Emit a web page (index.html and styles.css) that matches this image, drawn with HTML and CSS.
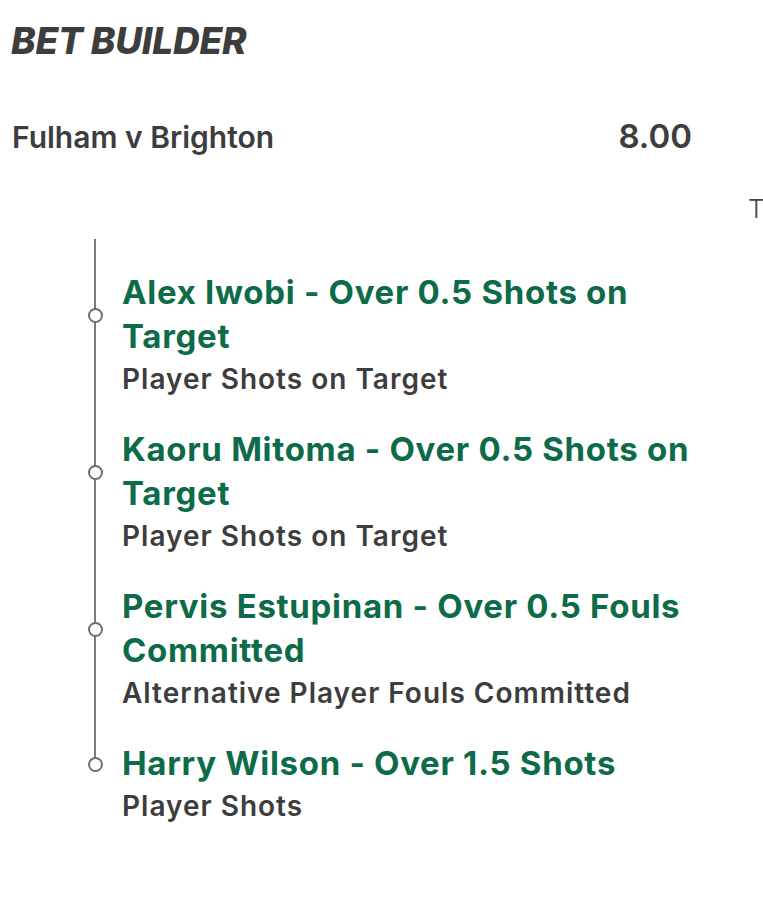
FILE: index.html
```html
<!DOCTYPE html>
<html lang="en">
<head>
<meta charset="utf-8">
<title>Bet Builder</title>
<link rel="stylesheet" href="styles.css">
</head>
<body>
<div class="page">
  <h1 class="title">BET BUILDER</h1>
  <div class="match-row">
    <span class="match">Fulham v Brighton</span>
    <span class="odds">8.00</span>
  </div>
  <div class="clip-row"><span class="clip-text">T</span></div>
  <div class="legs">
    <div class="leg">
      <div class="leg-name">Alex Iwobi - Over 0.5 Shots on Target<span class="dot"></span></div>
      <div class="leg-market">Player Shots on Target</div>
    </div>
    <div class="leg">
      <div class="leg-name">Kaoru Mitoma - Over 0.5 Shots on Target<span class="dot"></span></div>
      <div class="leg-market">Player Shots on Target</div>
    </div>
    <div class="leg">
      <div class="leg-name">Pervis Estupinan - Over 0.5 Fouls Committed<span class="dot"></span></div>
      <div class="leg-market">Alternative Player Fouls Committed</div>
    </div>
    <div class="leg">
      <div class="leg-name">Harry Wilson - Over 1.5 Shots<span class="dot"></span></div>
      <div class="leg-market">Player Shots</div>
    </div>
  </div>
</div>
</body>
</html>
```

FILE: styles.css
```css
* { box-sizing: border-box; }
html, body {
  margin: 0;
  padding: 0;
  background: #ffffff;
}
body {
  font-family: Inter, "Noto Sans", "Liberation Sans", sans-serif;
  color: #3e3e3e;
  width: 763px;
  height: 915px;
  overflow: hidden;
}
.page {
  padding-top: 18px;
}
.title {
  margin: 0 0 0 11px;
  font-size: 37px;
  line-height: 46px;
  font-weight: 800;
  font-style: italic;
  letter-spacing: -0.2px;
  color: #3d3d3d;
}
.match-row {
  display: flex;
  justify-content: space-between;
  align-items: baseline;
  margin-top: 52px;
  padding: 0 71px 0 12px;
  line-height: 40px;
}
.match {
  font-size: 30px;
  font-weight: 600;
  color: #3d3d3d;
}
.odds {
  font-size: 33px;
  font-weight: 600;
  color: #3d3d3d;
}
.clip-row {
  margin-top: 37px;
  padding-left: 748px;
  white-space: nowrap;
  line-height: 30px;
}
.clip-text {
  font-size: 26px;
  font-weight: 300;
  color: #444;
}
.legs {
  position: relative;
  margin-top: 12px;
  padding: 31px 0 0 122px;
}
.legs::before {
  content: "";
  position: absolute;
  left: 94px;
  top: 0;
  bottom: 66px;
  width: 2px;
  background: #7a7a7a;
}
.leg {
  margin-bottom: 29px;
}
.leg:last-child {
  margin-bottom: 0;
}
.leg-name {
  position: relative;
  font-size: 33px;
  line-height: 44px;
  font-weight: 700;
  letter-spacing: 0.7px;
  color: #0d6b49;
  padding-right: 60px;
}
.dot {
  position: absolute;
  left: -34px;
  top: 50%;
  width: 15px;
  height: 15px;
  margin-top: -6px;
  border: 2px solid #6e6e6e;
  border-radius: 50%;
  background: #fff;
}
.leg-market {
  margin-top: 2px;
  font-size: 28px;
  line-height: 38px;
  font-weight: 600;
  letter-spacing: 1px;
  color: #3d3d3d;
}
```
